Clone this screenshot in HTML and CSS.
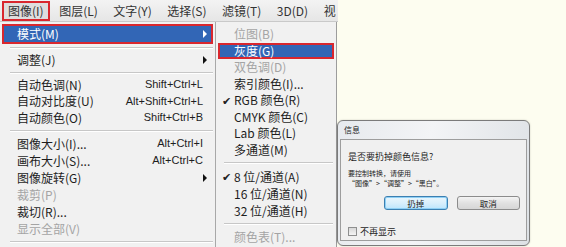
FILE: index.html
```html
<!DOCTYPE html>
<html lang="zh-CN">
<head>
    <meta charset="UTF-8">
    <meta name="viewport" content="width=device-width, initial-scale=1.0">
    <title>图像 - 模式</title>
    <link rel="stylesheet" href="styles.css">
</head>
<body>
    <div class="app">
        <div class="menubar">
            <span class="bar-item active">图像(I)</span>
            <span class="bar-item">图层(L)</span>
            <span class="bar-item">文字(Y)</span>
            <span class="bar-item">选择(S)</span>
            <span class="bar-item">滤镜(T)</span>
            <span class="bar-item">3D(D)</span>
            <span class="bar-item">视</span>
        </div>

        <div class="menus">
            <div class="menu main">
                <div class="item selected"><span>模式(M)</span><span class="arrow white"></span></div>
                <div class="sep"></div>
                <div class="item"><span>调整(J)</span><span class="arrow"></span></div>
                <div class="sep"></div>
                <div class="item"><span>自动色调(N)</span><span class="key">Shift+Ctrl+L</span></div>
                <div class="item"><span>自动对比度(U)</span><span class="key">Alt+Shift+Ctrl+L</span></div>
                <div class="item"><span>自动颜色(O)</span><span class="key">Shift+Ctrl+B</span></div>
                <div class="sep mid"></div>
                <div class="group">
                    <div class="item"><span>图像大小(I)...</span><span class="key">Alt+Ctrl+I</span></div>
                    <div class="item"><span>画布大小(S)...</span><span class="key">Alt+Ctrl+C</span></div>
                    <div class="item"><span>图像旋转(G)</span><span class="arrow"></span></div>
                    <div class="item off"><span>裁剪(P)</span></div>
                    <div class="item"><span>裁切(R)...</span></div>
                    <div class="item off"><span>显示全部(V)</span></div>
                </div>
                <div class="sep wide"></div>
            </div>

            <div class="menu sub">
                <div class="item off"><span class="check"></span><span>位图(B)</span></div>
                <div class="item selected"><span class="check"></span><span>灰度(G)</span></div>
                <div class="item off"><span class="check"></span><span>双色调(D)</span></div>
                <div class="item"><span class="check"></span><span>索引颜色(I)...</span></div>
                <div class="item"><span class="check">✔</span><span>RGB 颜色(R)</span></div>
                <div class="item"><span class="check"></span><span>CMYK 颜色(C)</span></div>
                <div class="item"><span class="check"></span><span>Lab 颜色(L)</span></div>
                <div class="item"><span class="check"></span><span>多通道(M)</span></div>
                <div class="sep wide"></div>
                <div class="group">
                    <div class="item"><span class="check">✔</span><span>8 位/通道(A)</span></div>
                    <div class="item"><span class="check"></span><span>16 位/通道(N)</span></div>
                    <div class="item"><span class="check"></span><span>32 位/通道(H)</span></div>
                </div>
                <div class="sep wide"></div>
                <div class="item off"><span class="check"></span><span>颜色表(T)...</span></div>
            </div>
        </div>
    </div>

    <div class="desk">
        <div class="dialog">
            <div class="dialog-title">信息</div>
            <div class="dialog-body">
                <p class="question">是否要扔掉颜色信息?</p>
                <p class="hint">要控制转换，请使用</p>
                <p class="hint tight">“图像”&gt;“调整”&gt;“黑白”。</p>
                <div class="buttons">
                    <button class="btn default">扔掉</button>
                    <button class="btn">取消</button>
                </div>
                <label class="dont-show"><span class="box"></span>不再显示</label>
            </div>
        </div>
    </div>
</body>
</html>
```

FILE: styles.css
```css
body {
    margin: 0;
    width: 566px;
    height: 247px;
    overflow: hidden;
    display: flex;
    background-color: #fdfdf0;
    font-family: "Noto Sans CJK SC", "DejaVu Sans", sans-serif;
    font-size: 12px;
    color: #1e1e1e;
}

.app {
    width: 337px;
    height: 247px;
    display: flex;
    flex-direction: column;
}

/* top menu bar */
.menubar {
    width: 338px;
    height: 22px;
    flex: none;
    box-sizing: border-box;
    display: flex;
    align-items: stretch;
    gap: 3.5px;
    padding: 1px 0 0 2px;
    background: linear-gradient(#f3f3f3, #e6e6e6);
    border-bottom: 1px solid #c9c9c9;
    overflow: hidden;
}

.bar-item {
    display: flex;
    align-items: center;
    padding: 0 4px;
    border: 2px solid transparent;
    color: #333;
    line-height: 1;
    white-space: nowrap;
}

.bar-item.active {
    border-color: #d9272e;
    background: #dedede;
}

/* dropdowns */
.menus {
    flex: 1;
    display: flex;
    align-items: stretch;
    overflow: hidden;
}

.menu {
    background: #f1f1f1;
    box-sizing: border-box;
}

.menu.main {
    width: 216px;
    padding-top: 2px;
    border-right: 1px solid #a8a8a8;
}

.menu.sub {
    width: 121px;
    padding-top: 4px;
    border-right: 1px solid #9c9c9c;
    box-shadow: 2px 0 2px rgba(0, 0, 0, 0.15);
}

.item {
    height: 16.5px;
    margin: 0 2px;
    padding: 0 4px 0 13px;
    border: 2px solid transparent;
    box-sizing: border-box;
    display: flex;
    align-items: center;
    justify-content: space-between;
    line-height: 1;
    white-space: nowrap;
}

.group .item {
    height: 17px;
}

.item.selected {
    background: #3266b6;
    border-color: #d9272e;
    color: #fff;
}

.main .item.selected {
    height: 20px;
}

.item.off {
    color: #a4a4a4;
}

.key {
    font-family: "Liberation Sans", Arial, sans-serif;
    font-size: 11px;
    margin-right: 4px;
}

.arrow {
    width: 0;
    height: 0;
    border-top: 4px solid transparent;
    border-bottom: 4px solid transparent;
    border-left: 4px solid #111;
}

.arrow.white {
    border-left-color: #fff;
}

.sub .item {
    justify-content: flex-start;
    padding-left: 2px;
}

.check {
    width: 12px;
    font-size: 11px;
    color: #222;
}

.sep {
    height: 8px;
    margin-left: 10px;
    display: flex;
    align-items: center;
}

.sep.mid {
    height: 9px;
}

.sep.wide {
    height: 10px;
}

.sep::after {
    content: "";
    flex: 1;
    height: 0;
    border-top: 1px solid #c7c7c7;
    border-bottom: 1px solid #fff;
}

.main .sep {
    margin-right: 2px;
}

.sub .sep {
    margin-left: 8px;
    margin-right: 3px;
}

/* dialog */
.desk {
    flex: 1;
    padding-top: 120px;
}

.dialog {
    width: 193px;
    height: 126px;
    box-sizing: border-box;
    border: 1px solid #7b7b7b;
    border-radius: 6px;
    background: linear-gradient(100deg, #e7eaee 0%, #f3f4f6 45%, #dde1e5 100%);
    padding: 0 2px 4px;
    display: flex;
    flex-direction: column;
    box-shadow: 0 0 2px rgba(0, 0, 0, 0.2);
}

.dialog-title {
    height: 18px;
    font-size: 8px;
    line-height: 18px;
    padding-left: 4px;
    color: #222;
}

.dialog-body {
    flex: 1;
    border: 1px solid #9d9d9d;
    background: #f0f0f0;
    padding: 0 6px 0 7px;
    font-size: 9px;
    display: flex;
    flex-direction: column;
}

.question {
    margin: 11px 0 0;
    font-size: 9px;
    line-height: 12px;
}

.hint {
    margin: 5px 0 0;
    font-size: 7px;
    line-height: 10px;
    height: 10px;
}

.hint.tight {
    margin-top: 0;
}

.buttons {
    display: flex;
    gap: 9px;
    margin: 8px 0 0 36px;
}

.btn {
    width: 64px;
    height: 14px;
    padding: 0;
    font-family: inherit;
    font-size: 8.5px;
    line-height: 1;
    color: #222;
    border: 1px solid #8c8c8c;
    border-radius: 3px;
    background: linear-gradient(#f4f4f4, #e1e1e1 50%, #d6d6d6);
}

.btn.default {
    border-color: #3c7fb1;
    background: linear-gradient(#eaf6fd, #d9effc 50%, #bde6fd);
    box-shadow: inset 0 0 0 1px #8fd0f5;
}

.dont-show {
    margin-top: auto;
    margin-bottom: 2px;
    display: flex;
    align-items: center;
    gap: 3px;
    font-size: 9px;
}

.box {
    width: 7px;
    height: 7px;
    border: 1px solid #8e8f8f;
    background: linear-gradient(#d8d8d8, #f4f4f4);
}
```
